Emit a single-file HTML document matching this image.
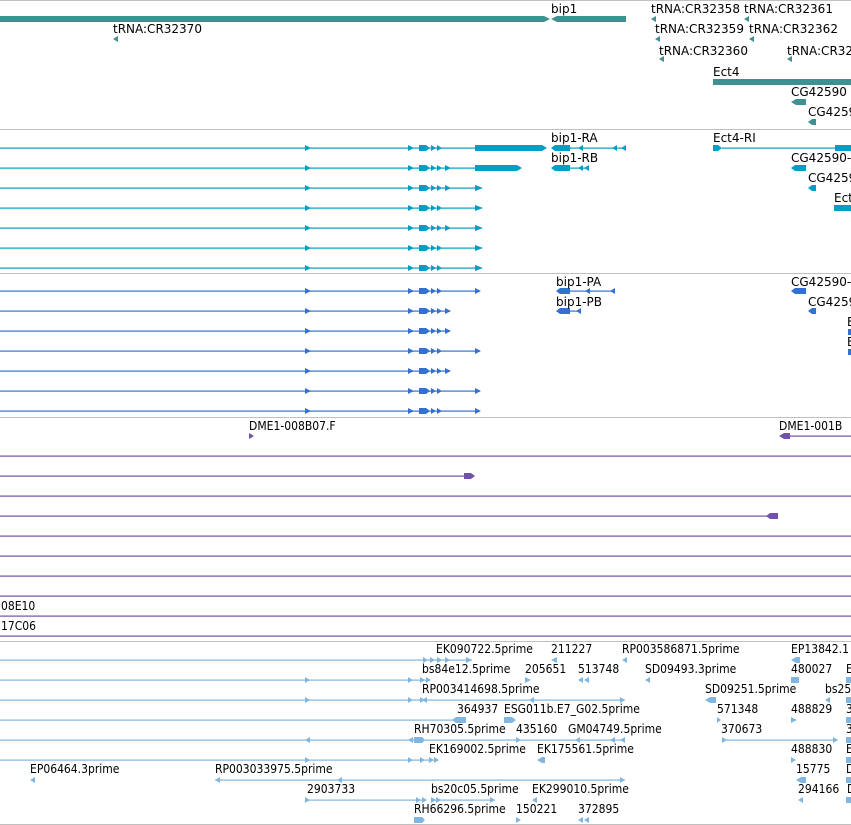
<!DOCTYPE html>
<html><head><meta charset="utf-8"><style>
html,body{margin:0;padding:0;background:#fff;width:851px;height:825px;overflow:hidden}
svg{display:block}
.t{font-family:"DejaVu Sans","Liberation Sans",sans-serif;font-size:12px;fill:#000}
.c{font-family:"DejaVu Sans Condensed","DejaVu Sans","Liberation Sans",sans-serif;font-size:12px;fill:#000}
</style></head><body>
<svg width="851" height="825" viewBox="0 0 851 825" xmlns="http://www.w3.org/2000/svg">
<!-- separators -->
<g fill="#c0c0c0">
<rect x="0" y="0" width="851" height="1"/><rect x="0" y="129" width="851" height="1"/>
<rect x="0" y="273" width="851" height="1"/><rect x="0" y="417" width="851" height="1"/>
<rect x="0" y="641" width="851" height="1"/><rect x="0" y="824" width="851" height="1"/>
</g>
<!-- track 1 genes -->
<g fill="#3f9090">
<polygon points="0,16 544,16 550,19 544,22 0,22"/>
<polygon points="551,19 557,16 626,16 626,22 557,22"/>
<polygon points="651,19 656,16 656,22"/><polygon points="744,19 749,16 749,22"/>
<polygon points="655,39 660,36 660,42"/><polygon points="749,39 754,36 754,42"/>
<polygon points="659,59 664,56 664,62"/><polygon points="787,59 792,56 792,62"/>
<polygon points="113,39 118,36 118,42"/>
<rect x="713" y="79" width="138" height="6"/>
<polygon points="791,102 796,99 806,99 806,105 796,105"/>
<polygon points="808,122 812,119 816,119 816,125 812,125"/>
</g>
<g class="t">
<text x="551" y="13">bip1</text><text x="651" y="13">tRNA:CR32358</text><text x="744" y="13">tRNA:CR32361</text>
<text x="113" y="33">tRNA:CR32370</text><text x="655" y="33">tRNA:CR32359</text><text x="749" y="33">tRNA:CR32362</text>
<text x="659" y="55">tRNA:CR32360</text><text x="787" y="55">tRNA:CR32</text>
<text x="713" y="76">Ect4</text><text x="791" y="96">CG42590</text><text x="808" y="116">CG4259</text>
</g>
<!-- track 2 transcripts -->
<g fill="#00a0c6">
<rect x="0" y="147.5" width="475" height="1.2"/><rect x="0" y="167.5" width="475" height="1.2"/>
<rect x="0" y="187.5" width="480" height="1.2"/><rect x="0" y="207.5" width="480" height="1.2"/>
<rect x="0" y="227.5" width="480" height="1.2"/><rect x="0" y="247.5" width="480" height="1.2"/>
<rect x="0" y="267.5" width="480" height="1.2"/>
<polygon points="475,145 542,145 547,148 542,151 475,151"/>
<polygon points="475,165 517,165 522,168 517,171 475,171"/>
<polygon points="551,148 555,145 570,145 570,151 555,151"/><rect x="570" y="147.5" width="56" height="1.2"/>
<polygon points="578,148 583,145 583,151"/><polygon points="612,148 617,145 617,151"/><polygon points="621,148 626,145 626,151"/>
<polygon points="551,168 555,165 570,165 570,171 555,171"/><rect x="570" y="167.5" width="16" height="1.2"/>
<polygon points="578,168 583,165 583,171"/><polygon points="584,168 589,165 589,171"/>
<polygon points="713,145 718,145 722,148 718,151 713,151"/><rect x="722" y="147.5" width="113" height="1.2"/><rect x="835" y="145" width="16" height="6"/>
<polygon points="791,168 795,165 806,165 806,171 795,171"/>
<polygon points="808,188 812,185 816,185 816,191 812,191"/>
<rect x="834" y="205" width="17" height="6"/>
</g>
<g fill="#00a0c6" id="r2">
<!-- per-row markers -->
</g>
<g fill="#00a0c6">
<!-- generated arrows for rows -->
<polygon points="305,145 311,148 305,151"/><polygon points="408,145 414,148 408,151"/><rect x="419" y="145" width="7" height="6"/><polygon points="426,145 430,148 426,151"/><polygon points="431,145 436,148 431,151"/><polygon points="437,145 442,148 437,151"/>
<polygon points="305,165 311,168 305,171"/><polygon points="408,165 414,168 408,171"/><rect x="419" y="165" width="7" height="6"/><polygon points="426,165 430,168 426,171"/><polygon points="431,165 436,168 431,171"/><polygon points="437,165 442,168 437,171"/><polygon points="445,165 451,168 445,171"/>
<polygon points="305,185 311,188 305,191"/><polygon points="408,185 414,188 408,191"/><rect x="419" y="185" width="7" height="6"/><polygon points="426,185 430,188 426,191"/><polygon points="431,185 436,188 431,191"/><polygon points="437,185 442,188 437,191"/><polygon points="445,185 451,188 445,191"/><polygon points="475,185 483,188 475,191"/>
<polygon points="305,205 311,208 305,211"/><polygon points="408,205 414,208 408,211"/><rect x="419" y="205" width="7" height="6"/><polygon points="426,205 430,208 426,211"/><polygon points="431,205 436,208 431,211"/><polygon points="437,205 442,208 437,211"/><polygon points="475,205 483,208 475,211"/>
<polygon points="305,225 311,228 305,231"/><polygon points="408,225 414,228 408,231"/><rect x="419" y="225" width="7" height="6"/><polygon points="426,225 430,228 426,231"/><polygon points="431,225 436,228 431,231"/><polygon points="437,225 442,228 437,231"/><polygon points="445,225 451,228 445,231"/><polygon points="475,225 483,228 475,231"/>
<polygon points="305,245 311,248 305,251"/><polygon points="408,245 414,248 408,251"/><rect x="419" y="245" width="7" height="6"/><polygon points="426,245 430,248 426,251"/><polygon points="431,245 436,248 431,251"/><polygon points="437,245 442,248 437,251"/><polygon points="475,245 483,248 475,251"/>
<polygon points="305,265 311,268 305,271"/><polygon points="408,265 414,268 408,271"/><rect x="419" y="265" width="7" height="6"/><polygon points="426,265 430,268 426,271"/><polygon points="431,265 436,268 431,271"/><polygon points="437,265 442,268 437,271"/><polygon points="475,265 483,268 475,271"/>
</g>
<g class="t">
<text x="551" y="142">bip1-RA</text><text x="551" y="162">bip1-RB</text>
<text x="713" y="142">Ect4-RI</text><text x="791" y="162">CG42590-</text><text x="808" y="182">CG4259</text><text x="834" y="202">Ect</text>
</g>
<!-- track 3 proteins -->
<g fill="#3370d0">
<rect x="0" y="290.5" width="480" height="1.2"/><rect x="0" y="310.5" width="450" height="1.2"/>
<rect x="0" y="330.5" width="450" height="1.2"/><rect x="0" y="350.5" width="480" height="1.2"/>
<rect x="0" y="370.5" width="450" height="1.2"/><rect x="0" y="390.5" width="480" height="1.2"/>
<rect x="0" y="410.5" width="480" height="1.2"/>
<polygon points="305,288 311,291 305,294"/><polygon points="408,288 414,291 408,294"/><rect x="419" y="288" width="7" height="6"/><polygon points="426,288 430,291 426,294"/><polygon points="431,288 436,291 431,294"/><polygon points="437,288 442,291 437,294"/><polygon points="475,288 481,291 475,294"/>
<polygon points="305,308 311,311 305,314"/><polygon points="408,308 414,311 408,314"/><rect x="419" y="308" width="7" height="6"/><polygon points="426,308 430,311 426,314"/><polygon points="431,308 436,311 431,314"/><polygon points="437,308 442,311 437,314"/><polygon points="445,308 451,311 445,314"/>
<polygon points="305,328 311,331 305,334"/><polygon points="408,328 414,331 408,334"/><rect x="419" y="328" width="7" height="6"/><polygon points="426,328 430,331 426,334"/><polygon points="431,328 436,331 431,334"/><polygon points="437,328 442,331 437,334"/><polygon points="445,328 451,331 445,334"/>
<polygon points="305,348 311,351 305,354"/><polygon points="408,348 414,351 408,354"/><rect x="419" y="348" width="7" height="6"/><polygon points="426,348 430,351 426,354"/><polygon points="431,348 436,351 431,354"/><polygon points="437,348 442,351 437,354"/><polygon points="475,348 481,351 475,354"/>
<polygon points="305,368 311,371 305,374"/><polygon points="408,368 414,371 408,374"/><rect x="419" y="368" width="7" height="6"/><polygon points="426,368 430,371 426,374"/><polygon points="431,368 436,371 431,374"/><polygon points="437,368 442,371 437,374"/><polygon points="445,368 451,371 445,374"/>
<polygon points="305,388 311,391 305,394"/><polygon points="408,388 414,391 408,394"/><rect x="419" y="388" width="7" height="6"/><polygon points="426,388 430,391 426,394"/><polygon points="431,388 436,391 431,394"/><polygon points="437,388 442,391 437,394"/><polygon points="475,388 481,391 475,394"/>
<polygon points="305,408 311,411 305,414"/><polygon points="408,408 414,411 408,414"/><rect x="419" y="408" width="7" height="6"/><polygon points="426,408 430,411 426,414"/><polygon points="431,408 436,411 431,414"/><polygon points="437,408 442,411 437,414"/><polygon points="475,408 481,411 475,414"/>
<polygon points="556,291 560,288 570,288 570,294 560,294"/><rect x="570" y="290.5" width="45" height="1.2"/>
<polygon points="585,291 590,288 590,294"/><polygon points="610,291 615,288 615,294"/>
<polygon points="556,311 560,308 570,308 570,314 560,314"/><rect x="570" y="310.5" width="11" height="1.2"/><polygon points="576,311 581,308 581,314"/>
<polygon points="791,291 795,288 806,288 806,294 795,294"/>
<polygon points="808,311 812,308 816,308 816,314 812,314"/>
<rect x="848" y="329" width="3" height="6"/><rect x="848" y="349" width="3" height="6"/>
</g>
<g class="t">
<text x="556" y="286">bip1-PA</text><text x="556" y="306">bip1-PB</text>
<text x="791" y="286">CG42590-</text><text x="808" y="306">CG4259</text>
<text x="847" y="326">E</text><text x="847" y="346">E</text>
</g>
<!-- purple track -->
<g fill="#7052aa">
<polygon points="249,433 254,436 249,439"/>
<polygon points="779,436 784,433 790,433 790,439 784,439"/><rect x="790" y="435.5" width="61" height="1.2"/>
<rect x="0" y="455.5" width="851" height="1.2"/>
<rect x="0" y="475.5" width="464" height="1.2"/><polygon points="464,473 471,473 475,476 471,479 464,479"/>
<rect x="0" y="495.5" width="851" height="1.2"/>
<rect x="0" y="515.5" width="770" height="1.2"/><polygon points="766,516 770,513 778,513 778,519 770,519"/>
<rect x="0" y="535.5" width="851" height="1.2"/><rect x="0" y="555.5" width="851" height="1.2"/>
<rect x="0" y="575.5" width="851" height="1.2"/><rect x="0" y="595.5" width="851" height="1.2"/>
<rect x="0" y="615.5" width="851" height="1.2"/><rect x="0" y="635.5" width="851" height="1.2"/>
</g>
<g class="c">
<text x="249" y="430">DME1-008B07.F</text><text x="779" y="430">DME1-001B</text>
<text x="1" y="610">08E10</text><text x="1" y="630">17C06</text>
</g>
<!-- bottom ESTs -->
<g fill="#80b6e0">
<rect x="0" y="659.5" width="472" height="1.2"/><rect x="0" y="679.5" width="430" height="1.2"/>
<rect x="0" y="699.5" width="625" height="1.2"/><rect x="0" y="719.5" width="462" height="1.2"/>
<rect x="0" y="739.5" width="625" height="1.2"/><rect x="722" y="739.5" width="116" height="1.2"/>
<rect x="0" y="759.5" width="437" height="1.2"/><rect x="215" y="779.5" width="410" height="1.2"/>
<rect x="307" y="799.5" width="115" height="1.2"/><rect x="431" y="799.5" width="64" height="1.2"/>
<polygon points="423,657 428,660 423,663"/><polygon points="430,657 435,660 430,663"/><polygon points="437,657 442,660 437,663"/><polygon points="445,657 450,660 445,663"/><polygon points="466,657 472,660 466,663"/>
<polygon points="551,660 557,657 557,663"/><polygon points="622,660 627,657 627,663"/><polygon points="791,660 796,657 800,657 800,663 796,663"/>
<polygon points="305,677 310,680 305,683"/><polygon points="408,677 413,680 408,683"/><polygon points="420,677 425,680 420,683"/><polygon points="426,677 431,680 426,683"/>
<polygon points="525,677 531,680 525,683"/><polygon points="578,680 583,677 583,683"/><polygon points="584,680 589,677 589,683"/><polygon points="645,680 650,677 650,683"/><rect x="791" y="677" width="8" height="6"/><rect x="846" y="677" width="5" height="6"/>
<polygon points="305,697 310,700 305,703"/><polygon points="408,697 413,700 408,703"/><polygon points="420,697 425,700 420,703"/><polygon points="422,700 427,697 427,703"/><polygon points="529,700 534,697 534,703"/><polygon points="620,697 625,700 620,703"/>
<polygon points="705,700 710,697 716,697 716,703 710,703"/><polygon points="825,700 830,697 830,703"/><rect x="846" y="697" width="5" height="6"/>
<polygon points="452,720 456,717 466,717 466,723 456,723"/><polygon points="504,717 512,717 516,720 512,723 504,723"/><polygon points="717,717 721,720 717,723"/><polygon points="791,717 797,720 791,723"/><rect x="846" y="717" width="5" height="6"/>
<polygon points="305,740 310,737 310,743"/><polygon points="408,740 413,737 413,743"/><polygon points="414,737 422,737 425,740 422,743 414,743"/><polygon points="516,737 521,740 516,743"/><polygon points="575,740 580,737 580,743"/><polygon points="610,740 615,737 615,743"/><polygon points="620,740 625,737 625,743"/>
<polygon points="722,737 727,740 722,743"/><polygon points="833,737 838,740 833,743"/><rect x="846" y="737" width="5" height="6"/>
<polygon points="305,757 310,760 305,763"/><polygon points="408,757 413,760 408,763"/><polygon points="420,757 425,760 420,763"/><polygon points="429,757 434,760 429,763"/><polygon points="434,757 439,760 434,763"/><polygon points="537,760 542,757 545,757 545,763 542,763"/><polygon points="791,757 796,760 791,763"/><rect x="846" y="757" width="5" height="6"/>
<polygon points="30,780 35,777 35,783"/><polygon points="215,780 220,777 220,783"/><polygon points="337,780 342,777 342,783"/><polygon points="620,777 625,780 620,783"/><polygon points="796,780 801,777 806,777 806,783 801,783"/><rect x="846" y="777" width="5" height="6"/>
<polygon points="305,797 310,800 305,803"/><polygon points="416,797 421,800 416,803"/><polygon points="422,797 427,800 422,803"/><polygon points="431,797 436,800 431,803"/><polygon points="436,797 441,800 436,803"/><polygon points="490,797 495,800 490,803"/><polygon points="532,800 537,797 537,803"/><polygon points="798,800 803,797 803,803"/><rect x="846" y="797" width="5" height="6"/>
<polygon points="414,817 422,817 425,820 422,823 414,823"/><polygon points="516,817 521,820 516,823"/><polygon points="578,820 583,817 583,823"/><polygon points="584,820 589,817 589,823"/>
</g>
<g class="c">
<text x="436" y="653">EK090722.5prime</text><text x="551" y="653">211227</text><text x="622" y="653">RP003586871.5prime</text><text x="791" y="653">EP13842.1</text>
<text x="422" y="673">bs84e12.5prime</text><text x="525" y="673">205651</text><text x="578" y="673">513748</text><text x="645" y="673">SD09493.3prime</text><text x="791" y="673">480027</text><text x="846" y="673">E</text>
<text x="422" y="693">RP003414698.5prime</text><text x="705" y="693">SD09251.5prime</text><text x="825" y="693">bs25</text>
<text x="457" y="713">364937</text><text x="504" y="713">ESG011b.E7_G02.5prime</text><text x="717" y="713">571348</text><text x="791" y="713">488829</text><text x="846" y="713">3</text>
<text x="414" y="733">RH70305.5prime</text><text x="516" y="733">435160</text><text x="568" y="733">GM04749.5prime</text><text x="721" y="733">370673</text><text x="846" y="733">3</text>
<text x="429" y="753">EK169002.5prime</text><text x="537" y="753">EK175561.5prime</text><text x="791" y="753">488830</text><text x="846" y="753">E</text>
<text x="30" y="773">EP06464.3prime</text><text x="215" y="773">RP003033975.5prime</text><text x="796" y="773">15775</text><text x="846" y="773">D</text>
<text x="307" y="793">2903733</text><text x="431" y="793">bs20c05.5prime</text><text x="532" y="793">EK299010.5prime</text><text x="798" y="793">294166</text><text x="847" y="793">D</text>
<text x="414" y="813">RH66296.5prime</text><text x="516" y="813">150221</text><text x="578" y="813">372895</text>
</g>
</svg>
</body></html>
